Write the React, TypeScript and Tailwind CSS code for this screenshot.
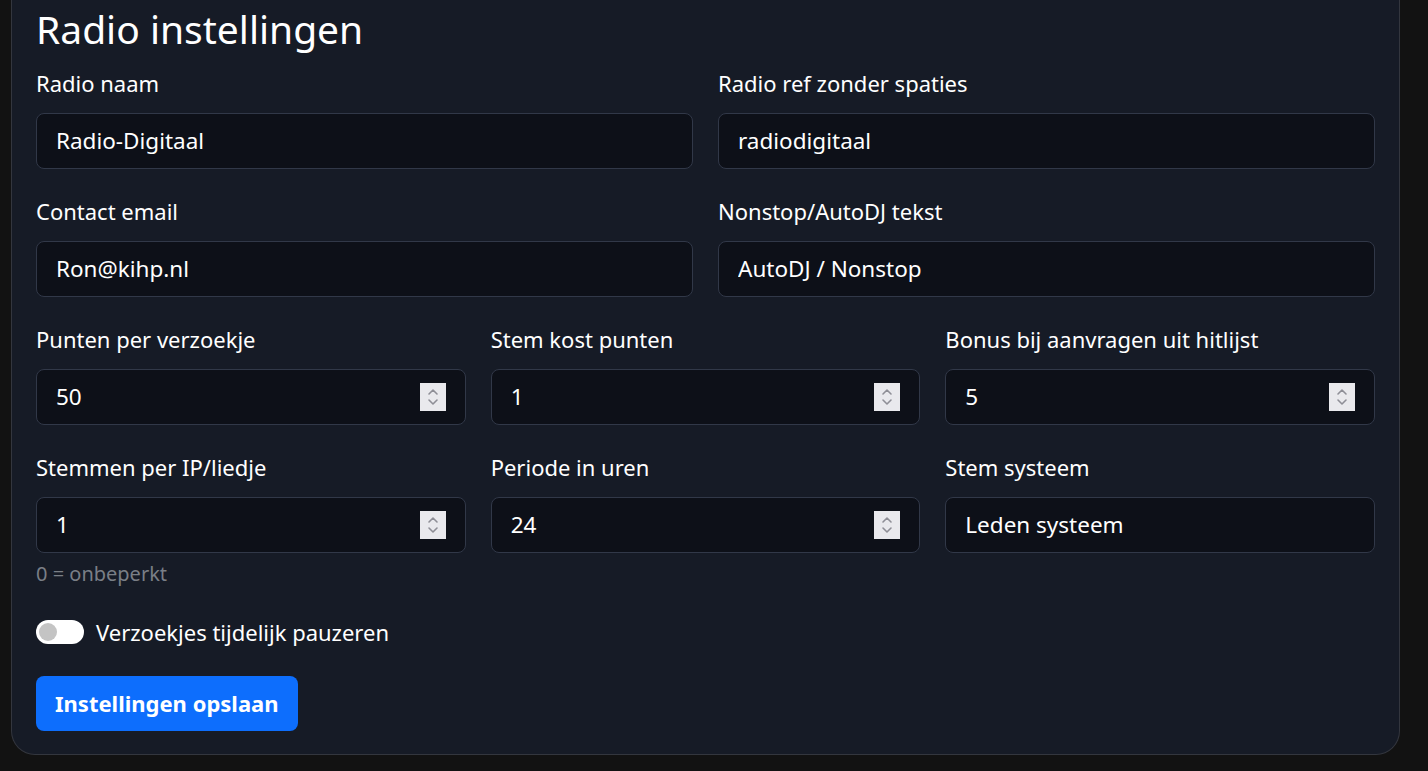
import React, { useState } from 'react';

const FONT = { fontFamily: '"Noto Sans", "Open Sans", sans-serif' };

interface FieldProps {
  label: string;
  value: string;
  number?: boolean;
  help?: string;
}

const Spinner: React.FC = () => (
  <div className="flex h-[28px] w-[26px] shrink-0 flex-col items-center justify-center bg-[#e9e9ed]">
    <svg width="12" height="22" viewBox="0 0 12 22" fill="none" stroke="#8e8e96" strokeWidth="1.6" strokeLinecap="round" strokeLinejoin="round">
      <path d="M2 8 L6 4 L10 8" />
      <path d="M2 14 L6 18 L10 14" />
    </svg>
  </div>
);

const Field: React.FC<FieldProps> = ({ label, value, number, help }) => {
  const [val, setVal] = useState(value);
  return (
    <div className="flex flex-col">
      <label className="mb-[17px] text-[22px] leading-[26px] text-white">{label}</label>
      <div className="flex h-[56px] items-center rounded-[8px] border border-[#313848] bg-[#0d1018] pl-[19px] pr-[19px]">
        <input
          value={val}
          onChange={e => setVal(e.target.value)}
          className="min-w-0 flex-1 bg-transparent text-[22.5px] text-white outline-none"
          style={FONT}
        />
        {number && <Spinner />}
      </div>
      {help && <p className="mt-[7px] text-[20px] leading-[27px] text-[#7a7f86]">{help}</p>}
    </div>
  );
};

export default function App() {
  const [paused, setPaused] = useState(false);

  return (
    <div className="h-[771px] overflow-hidden bg-[#121212] pl-[11px] pr-[28px]" style={FONT}>
      <div className="rounded-b-[24px] border border-t-0 border-[#33363e] bg-[#161b26] px-[24px] pt-[5px] pb-[23px]">
        <h1 className="mb-[17px] text-[39px] leading-[48px] text-white">Radio instellingen</h1>

        <div className="grid grid-cols-2 gap-x-[25px] gap-y-[29px]">
          <Field label="Radio naam" value="Radio-Digitaal" />
          <Field label="Radio ref zonder spaties" value="radiodigitaal" />
          <Field label="Contact email" value="Ron@kihp.nl" />
          <Field label="Nonstop/AutoDJ tekst" value="AutoDJ / Nonstop" />
        </div>

        <div className="mt-[29px] grid grid-cols-3 gap-x-[25px] gap-y-[29px]">
          <Field label="Punten per verzoekje" value="50" number />
          <Field label="Stem kost punten" value="1" number />
          <Field label="Bonus bij aanvragen uit hitlijst" value="5" number />
          <Field label="Stemmen per IP/liedje" value="1" number help="0 = onbeperkt" />
          <Field label="Periode in uren" value="24" number />
          <Field label="Stem systeem" value="Leden systeem" />
        </div>

        <div className="mt-[30px] flex items-center gap-[12px]">
          <button
            onClick={() => setPaused(p => !p)}
            className={`flex h-[24px] w-[48px] items-center rounded-full px-[3px] ${paused ? 'justify-end bg-[#0d6efd]' : 'justify-start bg-white'}`}
          >
            <span className={`h-[18px] w-[18px] rounded-full ${paused ? 'bg-white' : 'bg-[#c4c4c4]'}`} />
          </button>
          <span className="text-[22px] leading-[30px] text-white">Verzoekjes tijdelijk pauzeren</span>
        </div>

        <button className="mt-[29px] h-[55px] rounded-[8px] bg-[#0d6efd] px-[19px] text-[22px] font-bold text-white">
          Instellingen opslaan
        </button>
      </div>
    </div>
  );
}
